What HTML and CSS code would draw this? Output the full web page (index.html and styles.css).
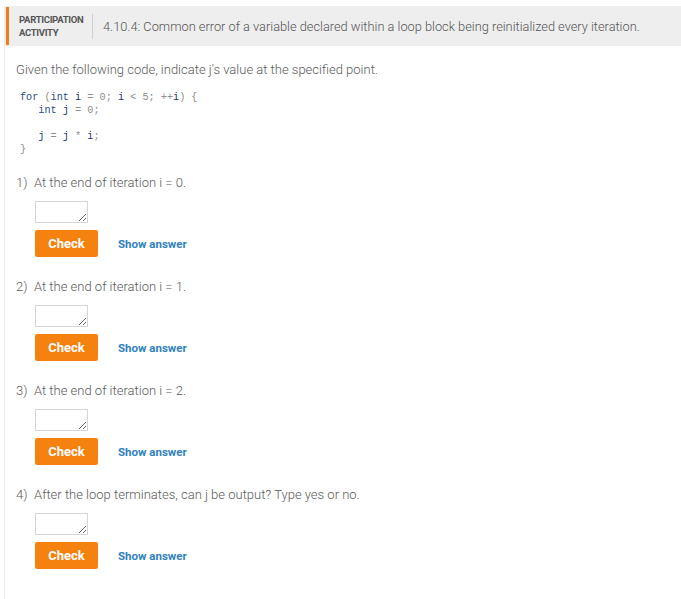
FILE: index.html
```html
<!DOCTYPE html>
<html>
<head>
<meta charset="utf-8">
<link rel="stylesheet" href="styles.css">
</head>
<body>
<div class="activity">
  <div class="header">
    <div class="accent"></div>
    <div class="label">PARTICIPATION<br>ACTIVITY</div>
    <div class="divider"></div>
    <div class="title">4.10.4: Common error of a variable declared within a loop block being reinitialized every iteration.</div>
  </div>
  <div class="content">
    <p class="intro">Given the following code, indicate j's value at the specified point.</p>
<pre class="code"><span class="kw">for</span> <span class="p">(</span><span class="kw">int</span> <span class="id">i</span> <span class="p">=</span> <span class="p">0;</span> <span class="id">i</span> <span class="p">&lt;</span> <span class="p">5;</span> <span class="p">++</span><span class="id">i</span><span class="p">) {</span>
   <span class="kw">int</span> <span class="id">j</span> <span class="p">=</span> <span class="p">0;</span>

   <span class="id">j</span> <span class="p">=</span> <span class="id">j</span> <span class="p">*</span> <span class="id">i</span><span class="p">;</span>
<span class="p">}</span></pre>

    <div class="question">
      <div class="q-text"><span class="num">1)</span><span>At the end of iteration i = 0.</span></div>
      <textarea class="answer"></textarea>
      <div class="actions"><button class="check">Check</button><span class="show">Show answer</span></div>
    </div>
    <div class="question">
      <div class="q-text"><span class="num">2)</span><span>At the end of iteration i = 1.</span></div>
      <textarea class="answer"></textarea>
      <div class="actions"><button class="check">Check</button><span class="show">Show answer</span></div>
    </div>
    <div class="question">
      <div class="q-text"><span class="num">3)</span><span>At the end of iteration i = 2.</span></div>
      <textarea class="answer"></textarea>
      <div class="actions"><button class="check">Check</button><span class="show">Show answer</span></div>
    </div>
    <div class="question">
      <div class="q-text"><span class="num">4)</span><span>After the loop terminates, can j be output? Type yes or no.</span></div>
      <textarea class="answer"></textarea>
      <div class="actions"><button class="check">Check</button><span class="show">Show answer</span></div>
    </div>
  </div>
</div>
</body>
</html>
```
FILE: styles.css
```css
html, body {
  margin: 0;
  padding: 0;
  background: #fff;
}
body {
  font-family: Roboto, "Liberation Sans", sans-serif;
  color: #5a5a5a;
}
.activity {
  margin-top: 6px;
  margin-left: 4px;
  border-left: 1px solid #ebebeb;
  min-height: 593px;
}
.header {
  display: flex;
  align-items: center;
  height: 40px;
  background: #eeeeee;
}
.accent {
  align-self: stretch;
  width: 3px;
  margin: 1px 0 1px 1px;
  background: #f07d1a;
}
.label {
  margin-left: 10px;
  width: 69px;
  font-size: 9.5px;
  font-weight: bold;
  line-height: 13px;
  color: #555;
  letter-spacing: -0.3px;
}
.divider {
  width: 1px;
  height: 25px;
  background: #cfcfcf;
  margin-left: 4px;
}
.title {
  margin-left: 10px;
  font-size: 12.8px;
  font-weight: 300;
  color: #555;
  white-space: nowrap;
}
.content {
  padding: 16px 0 0 11px;
}
.intro {
  margin: 0;
  font-size: 13px;
  font-weight: 300;
  line-height: 16px;
}
.code {
  margin: 13px 0 0 4px;
  font-family: "Liberation Mono", "DejaVu Sans Mono", monospace;
  font-size: 10.2px;
  line-height: 13px;
  color: #888;
}
.kw { color: #2a4c8d; }
.id { color: #24346b; }
.p { color: #8c8c8c; }
.question {
  margin-top: 19px;
}
.question + .question {
  margin-top: 22px;
}
.q-text {
  display: flex;
  font-size: 13px;
  font-weight: 300;
  line-height: 16px;
}
.num {
  width: 18px;
}
.answer {
  display: block;
  box-sizing: border-box;
  width: 53px;
  height: 22px;
  margin: 10px 0 0 19px;
  border: 1px solid #d6d6d6;
  resize: both;
  padding: 0;
}
.actions {
  display: flex;
  align-items: center;
  margin: 7px 0 0 19px;
}
.check {
  width: 63px;
  height: 27px;
  border: none;
  border-radius: 2px;
  background: #f5820f;
  color: #fff;
  font-family: Roboto, "Liberation Sans", sans-serif;
  font-size: 13px;
  font-weight: bold;
  padding: 0;
}
.show {
  margin-left: 20px;
  font-size: 11.5px;
  font-weight: bold;
  color: #2f7fc1;
}
```
